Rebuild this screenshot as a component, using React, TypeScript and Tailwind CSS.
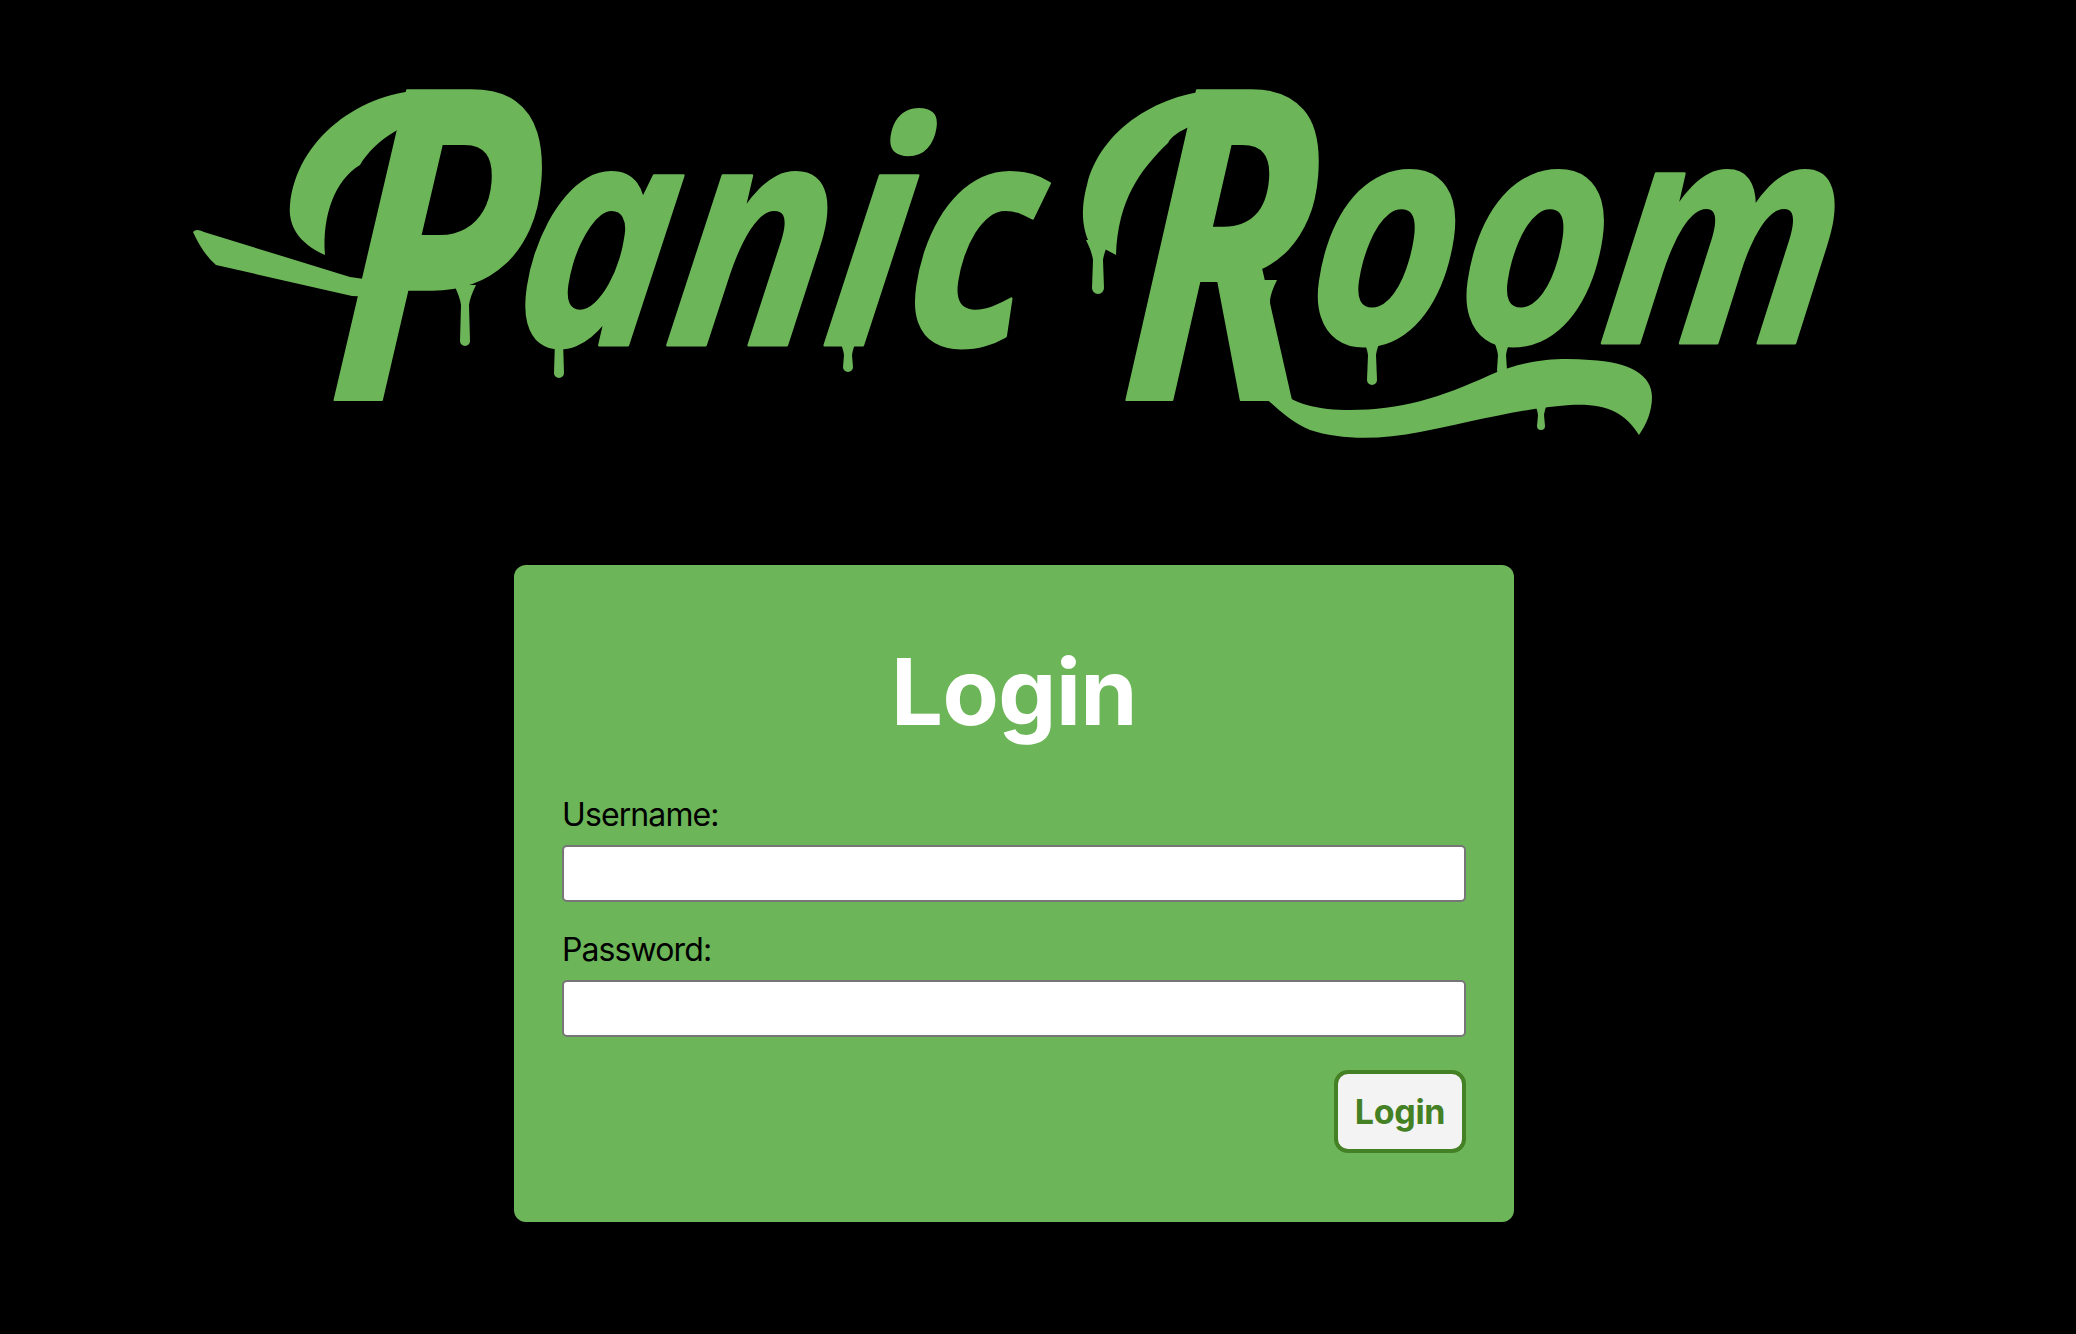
const GREEN = '#6cb558';

// vertical drips hanging off the wordmark: [x, top y, bottom y, half width]
const drips: [number, number, number, number][] = [
  [465, 285, 346, 5],
  [559, 320, 378, 5],
  [848, 335, 372, 5],
  [1098, 240, 294, 6],
  [1268, 280, 345, 3],
  [1372, 335, 385, 5],
  [1502, 335, 375, 5],
  [1541, 395, 430, 4],
];

function PanicRoomLogo() {
  return (
    <svg viewBox="0 0 2076 565" className="block w-[2076px] h-[565px]" role="img" aria-label="Panic Room">
      <g fill={GREEN} stroke={GREEN} strokeLinejoin="round" style={{ fontFamily: '"Open Sans", sans-serif', fontStyle: 'italic', fontWeight: 700 }}>
        <text transform="translate(326 400) scale(0.74 1) skewX(-6)" fontSize="434" strokeWidth="2">P</text>
        <text transform="translate(508 345) scale(0.84 1) skewX(-10)" fontSize="310" strokeWidth="3">anic</text>
        <text transform="translate(1118 400) scale(0.72 1) skewX(-6)" fontSize="434" strokeWidth="2">R</text>
        <text transform="translate(1300 343) scale(0.82 1) skewX(-10)" fontSize="310" strokeWidth="3">oom</text>
      </g>
      <g fill={GREEN}>
        {/* flourish looping over the P */}
        <path d="M325 255 C298 243 288 225 290 205 C296 140 360 90 430 90 L440 118 C405 120 375 140 360 165 C335 180 322 215 325 255 Z" />
        {/* crossbar through the P */}
        <path d="M193 232 Q196 228 204 232 L350 277 L400 284 L400 298 L352 296 L216 265 Q203 254 193 232 Z" />
        {/* flourish looping over the R */}
        <path d="M1116 255 L1088 240 C1080 220 1083 200 1087 185 C1100 130 1160 90 1225 90 L1235 118 C1200 120 1175 130 1168 143 C1140 170 1118 200 1116 255 Z" />
        {/* swash running off the R under "oom" */}
        <path d="M1250 360 L1275 385 C1290 405 1320 410 1350 410 C1400 410 1440 398 1490 375 C1530 358 1560 358 1590 360 C1630 362 1652 375 1652 397 C1652 412 1646 425 1639 435 C1625 412 1605 403 1570 405 C1520 408 1460 425 1420 432 C1380 440 1340 440 1310 430 C1285 420 1270 400 1250 385 Z" />
        {drips.map(([x, top, bottom, w]) => (
          <path
            key={x}
            d={`M${x - w - 6} ${top} Q${x - w} ${top + 12} ${x - w + 1} ${top + 20} L${x - w} ${bottom - w} A${w} ${w} 0 0 0 ${x + w} ${bottom - w} L${x + w - 1} ${top + 20} Q${x + w} ${top + 12} ${x + w + 6} ${top} Z`}
          />
        ))}
      </g>
    </svg>
  );
}

function Field({ label, type }: { label: string; type: string }) {
  return (
    <div className="flex flex-col">
      <label className="text-[32px] leading-[39px] tracking-[-0.9px] mb-[11px] text-black">{label}</label>
      <input type={type} className="h-[57px] w-full rounded-[5px] border-2 border-[#767676] bg-white" />
    </div>
  );
}

export default function App() {
  return (
    <div className="min-h-screen bg-black" style={{ fontFamily: 'Inter, sans-serif' }}>
      <div className="w-[2028px] flex flex-col items-center">
        <div className="self-start">
          <PanicRoomLogo />
        </div>
        <div className="w-[1000px] h-[657px] rounded-[12px] bg-[#6cb558] px-12 pt-12">
          <h1 className="mt-[21px] mb-[45px] text-center text-[92px] leading-[116px] tracking-[-0.6px] font-bold text-white">Login</h1>
          <div className="flex flex-col gap-[28px]">
            <Field label="Username:" type="text" />
            <Field label="Password:" type="password" />
          </div>
          <div className="flex justify-end mt-[33px]">
            <button className="w-[132px] h-[83px] rounded-[14px] border-4 border-[#448024] bg-[#f3f3f3] text-[34px] font-bold tracking-[-0.3px] text-[#448024]">
              Login
            </button>
          </div>
        </div>
      </div>
    </div>
  );
}
